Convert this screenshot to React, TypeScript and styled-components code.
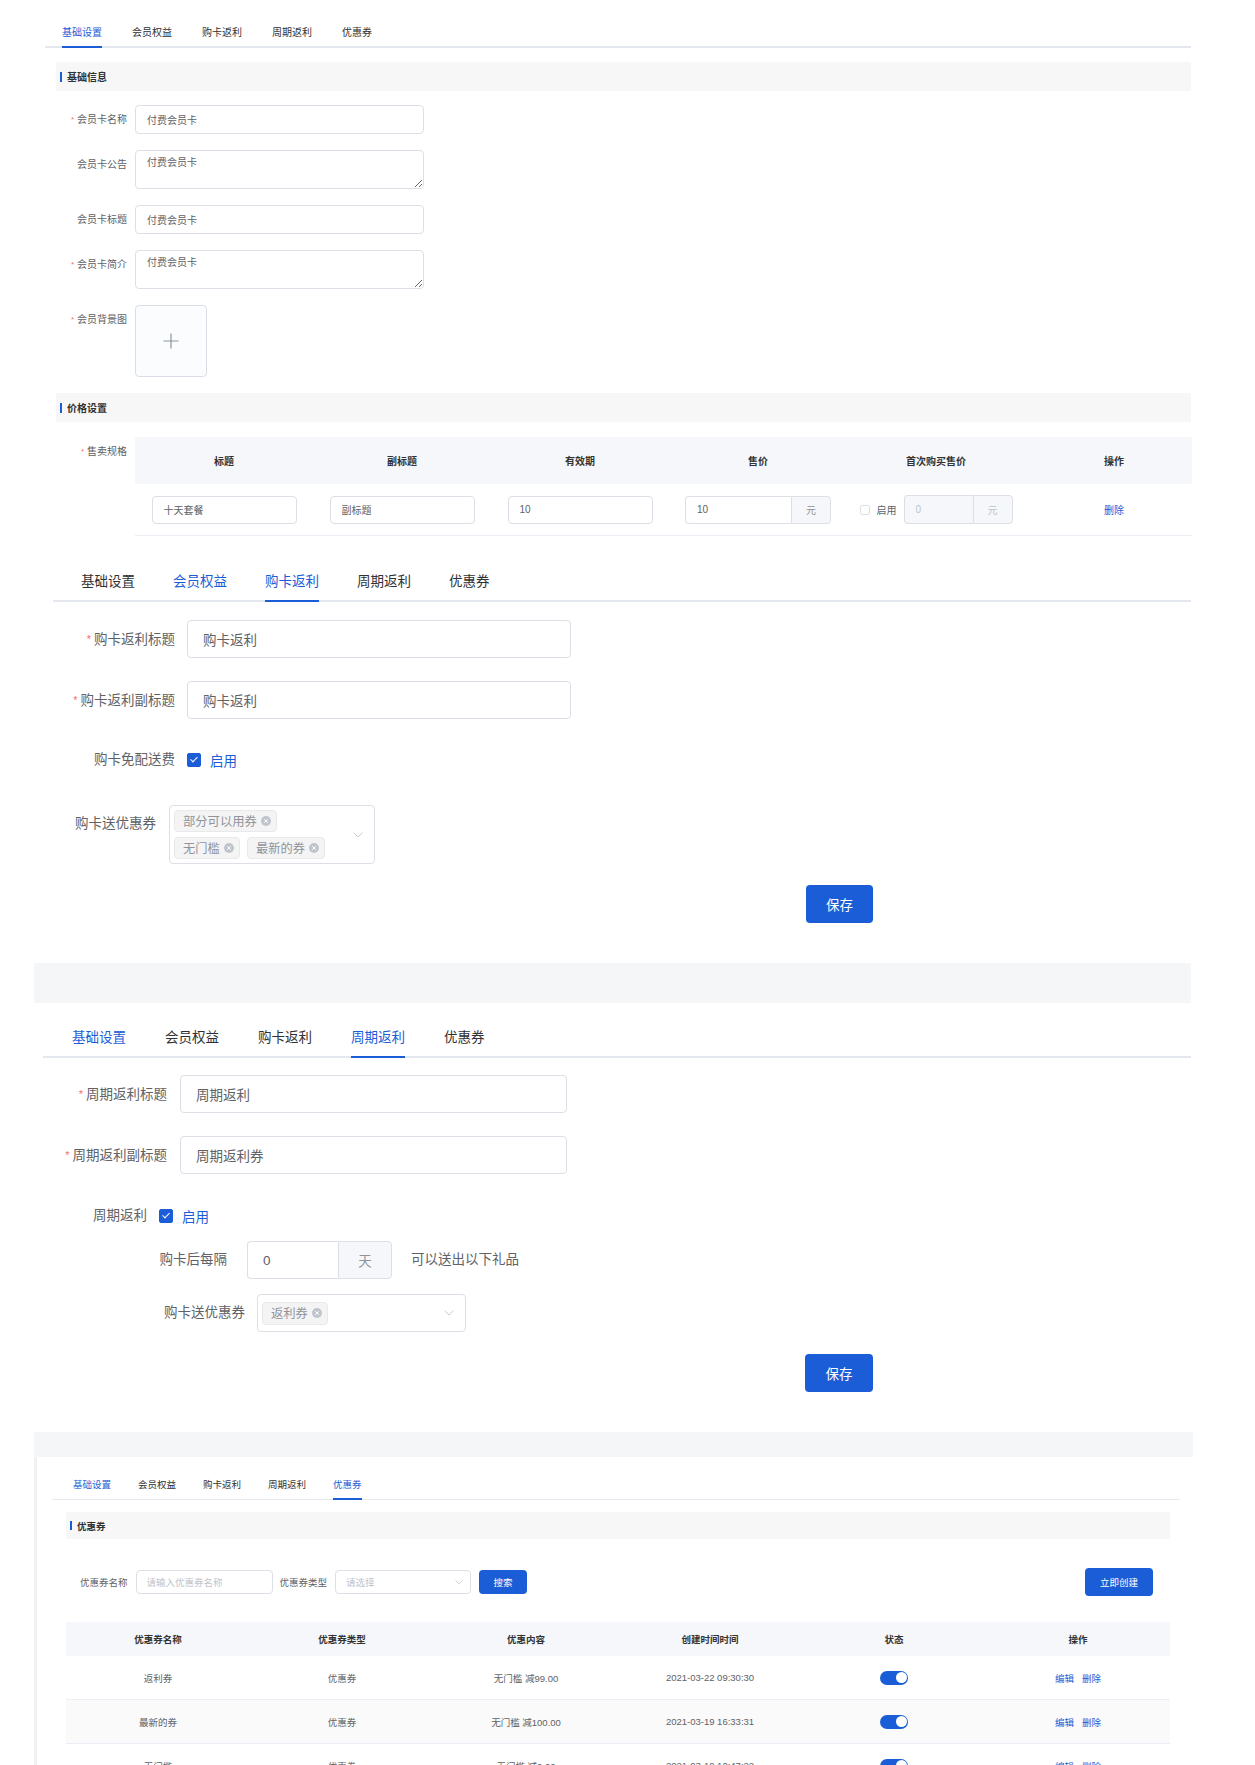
import React from "react";
import styled, { createGlobalStyle, css } from "styled-components";

const BLUE = "#1a5dd6";

const GlobalStyle = createGlobalStyle`
	* { box-sizing: border-box; }
	body {
		margin: 0;
		background: #fff;
		font-family: "Liberation Sans", "Noto Sans CJK SC", sans-serif;
		color: #606266;
	}
	input, textarea, button { font-family: inherit; }
`;

const Page = styled.div`
	width: 1255px;
	display: flex;
	flex-direction: column;
	padding-top: 20px;
`;

// ---------- tabs ----------
const TabBar = styled.div<{ $left: number; $width: number; $inset: number; $gap: number; $line: number; $top: number }>`
	display: flex;
	gap: ${({ $gap }) => $gap}px;
	margin: ${({ $top }) => $top}px 0 0 ${({ $left }) => $left}px;
	width: ${({ $width }) => $width}px;
	padding-left: ${({ $inset }) => $inset}px;
	border-bottom: ${({ $line }) => $line}px solid #e4e7ed;
`;

const TabItem = styled.div<{ $fs: number; $h: number; $line: number; $active?: boolean; $blue?: boolean }>`
	box-sizing: content-box;
	height: ${({ $h }) => $h}px;
	line-height: ${({ $h }) => $h}px;
	font-size: ${({ $fs }) => $fs}px;
	white-space: nowrap;
	color: ${({ $active, $blue }) => ($active || $blue ? BLUE : "#303133")};
	border-bottom: 2px solid ${({ $active }) => ($active ? BLUE : "transparent")};
	margin-bottom: -${({ $line }) => $line}px;
`;

const TABS = ["基础设置", "会员权益", "购卡返利", "周期返利", "优惠券"];

type TabCfg = { left: number; width: number; inset: number; gap: number; fs: number; h: number; line: number; top: number };

function Tabs({ cfg, active, blue = [] }: { cfg: TabCfg; active: number; blue?: number[] }) {
	return (
		<TabBar $left={cfg.left} $width={cfg.width} $inset={cfg.inset} $gap={cfg.gap} $line={cfg.line} $top={cfg.top}>
			{TABS.map((t, i) => (
				<TabItem key={t} $fs={cfg.fs} $h={cfg.h} $line={cfg.line} $active={i === active} $blue={blue.includes(i)}>
					{t}
				</TabItem>
			))}
		</TabBar>
	);
}

// ---------- shared blocks ----------
const SectionTitle = styled.div<{ $top: number; $left: number; $width: number; $h: number; $fs: number }>`
	display: flex;
	align-items: center;
	margin: ${({ $top }) => $top}px 0 0 ${({ $left }) => $left}px;
	width: ${({ $width }) => $width}px;
	height: ${({ $h }) => $h}px;
	padding-left: 4px;
	background: #f7f7f7;
	font-size: ${({ $fs }) => $fs}px;
	font-weight: bold;
	color: #303133;
	&::before {
		content: "";
		width: 2px;
		height: ${({ $fs }) => $fs}px;
		background: ${BLUE};
		margin-right: 5px;
	}
`;

const Band = styled.div<{ $top: number; $h: number }>`
	margin: ${({ $top }) => $top}px 0 0 34px;
	width: ${({ $h }) => ($h > 30 ? 1157 : 1159)}px;
	height: ${({ $h }) => $h}px;
	background: #f5f6f7;
`;

const Row = styled.div<{ $top: number; $left: number; $center?: boolean }>`
	display: flex;
	align-items: ${({ $center }) => ($center ? "center" : "flex-start")};
	margin: ${({ $top }) => $top}px 0 0 ${({ $left }) => $left}px;
`;

const Label = styled.div<{ $w: number; $pr: number; $fs: number; $lh: number; $req?: boolean }>`
	width: ${({ $w }) => $w}px;
	flex-shrink: 0;
	padding-right: ${({ $pr }) => $pr}px;
	text-align: right;
	font-size: ${({ $fs }) => $fs}px;
	line-height: ${({ $lh }) => $lh}px;
	color: #606266;
	white-space: nowrap;
	${({ $req }) =>
		$req &&
		css`
			&::before {
				content: "*";
				color: #f56c6c;
				margin-right: 3px;
				font-size: 0.8em;
				vertical-align: 1px;
			}
		`}
`;

const Field = styled.input<{ $w: number; $h: number; $fs: number; $pl: number; $joined?: boolean }>`
	display: block;
	width: ${({ $w }) => $w}px;
	height: ${({ $h }) => $h}px;
	padding: 0 ${({ $pl }) => $pl}px;
	border: 1px solid #dcdfe6;
	border-radius: ${({ $joined }) => ($joined ? "4px 0 0 4px" : "4px")};
	${({ $joined }) => $joined && "border-right: none;"}
	font-size: ${({ $fs }) => $fs}px;
	color: #606266;
	background: #fff;
	outline: none;
	&::placeholder { color: #c0c4cc; }
	&:disabled { background: #f5f7fa; color: #c0c4cc; }
`;

const Area = styled.textarea`
	display: block;
	width: 289px;
	height: 39px;
	padding: 5px 11px;
	border: 1px solid #dcdfe6;
	border-radius: 4px;
	font-size: 10px;
	line-height: 14px;
	color: #606266;
	resize: vertical;
	outline: none;
`;

const Group = styled.div<{ $h: number }>`
	display: flex;
	height: ${({ $h }) => $h}px;
`;

const Append = styled.div<{ $w: number; $fs: number; $muted?: boolean }>`
	display: flex;
	align-items: center;
	justify-content: center;
	width: ${({ $w }) => $w}px;
	border: 1px solid #dcdfe6;
	border-radius: 0 4px 4px 0;
	background: #f5f7fa;
	font-size: ${({ $fs }) => $fs}px;
	color: ${({ $muted }) => ($muted ? "#c0c4cc" : "#909399")};
`;

const Upload = styled.div`
	display: flex;
	align-items: center;
	justify-content: center;
	width: 72px;
	height: 72px;
	border: 1px solid #d9dee6;
	border-radius: 4px;
	background: #fbfcfe;
`;

const Check = styled.span<{ $size: number; $checked?: boolean }>`
	position: relative;
	display: inline-block;
	flex-shrink: 0;
	width: ${({ $size }) => $size}px;
	height: ${({ $size }) => $size}px;
	border: 1px solid ${({ $checked }) => ($checked ? BLUE : "#dcdfe6")};
	border-radius: 2px;
	background: ${({ $checked }) => ($checked ? BLUE : "#fff")};
	${({ $checked }) =>
		$checked &&
		css`
			&::after {
				content: "";
				position: absolute;
				left: 34%;
				top: 12%;
				width: 24%;
				height: 50%;
				border: solid #fff;
				border-width: 0 1.5px 1.5px 0;
				transform: rotate(45deg);
			}
		`}
`;

const CheckText = styled.span<{ $fs: number; $ml: number; $on?: boolean }>`
	margin-left: ${({ $ml }) => $ml}px;
	font-size: ${({ $fs }) => $fs}px;
	color: ${({ $on }) => ($on ? BLUE : "#606266")};
	white-space: nowrap;
`;

const Button = styled.button<{ $w: number; $h: number; $fs: number; $ml: string }>`
	flex-shrink: 0;
	width: ${({ $w }) => $w}px;
	height: ${({ $h }) => $h}px;
	margin-left: ${({ $ml }) => $ml};
	padding: 0;
	border: none;
	border-radius: 4px;
	background: ${BLUE};
	color: #fff;
	font-size: ${({ $fs }) => $fs}px;
`;

const ButtonRow = styled.div<{ $top: number; $left: number }>`
	display: flex;
	margin: ${({ $top }) => $top}px 0 0 ${({ $left }) => $left}px;
`;

// ---------- multi select ----------
const SelectBox = styled.div<{ $w: number; $h: number }>`
	display: flex;
	align-items: center;
	width: ${({ $w }) => $w}px;
	height: ${({ $h }) => $h}px;
	padding: 0 11px 0 4px;
	border: 1px solid #dcdfe6;
	border-radius: 4px;
	background: #fff;
`;

const TagWrap = styled.div<{ $w?: number }>`
	display: flex;
	flex-wrap: wrap;
	gap: 5px 7px;
	${({ $w }) => ($w ? `width: ${$w}px; margin-right: auto;` : "flex: 1;")}
`;

const Tag = styled.span<{ $h: number }>`
	display: inline-flex;
	align-items: center;
	gap: 4px;
	height: ${({ $h }) => $h}px;
	padding: 0 5px 0 8px;
	border: 1px solid #e9e9eb;
	border-radius: 4px;
	background: #f4f4f5;
	font-size: 12.3px;
	color: #909399;
	white-space: nowrap;
`;

const CloseDot = () => (
	<svg width="10" height="10" viewBox="0 0 10 10">
		<circle cx="5" cy="5" r="5" fill="#c0c4cc" />
		<path d="M3.2 3.2l3.6 3.6M6.8 3.2l-3.6 3.6" stroke="#fff" strokeWidth="1" />
	</svg>
);

const Chevron = ({ w = 10 }: { w?: number }) => (
	<svg width={w} height={w * 0.6} viewBox="0 0 10 6" style={{ flexShrink: 0 }}>
		<path d="M0.6 0.6L5 5 9.4 0.6" fill="none" stroke="#c0c4cc" strokeWidth="0.9" />
	</svg>
);

// ---------- spec table (section A) ----------
const SpecTable = styled.div`
	width: 1057px;
	overflow: hidden;
`;

const SpecGrid = styled.div`
	display: grid;
	grid-template-columns: repeat(6, 178px);
`;

const SpecHead = styled.div`
	display: flex;
	align-items: center;
	justify-content: center;
	height: 47px;
	background: #f5f7fa;
	font-size: 10px;
	font-weight: bold;
	color: #333;
`;

const SpecCell = styled.div`
	display: flex;
	align-items: center;
	justify-content: center;
	height: 52px;
	border-bottom: 1px solid #ebeef5;
	font-size: 10px;
`;

const LinkText = styled.span<{ $fs: number }>`
	font-size: ${({ $fs }) => $fs}px;
	color: ${BLUE};
`;

// ---------- coupon panel (section D) ----------
const Panel = styled.div`
	margin-left: 34px;
	border-left: 3px solid #f0f1f3;
	padding-bottom: 40px;
`;

const SearchRow = styled.div`
	display: flex;
	align-items: center;
	width: 1104px;
	height: 28px;
	margin: 29px 0 0 29px;
	padding: 0 17px 0 14px;
`;

const SearchLabel = styled.span<{ $ml: number }>`
	margin: 0 8px 0 ${({ $ml }) => $ml}px;
	font-size: 9.5px;
	color: #606266;
	white-space: nowrap;
`;

const MiniSelect = styled.div`
	display: flex;
	align-items: center;
	justify-content: space-between;
	width: 136px;
	height: 24px;
	padding: 0 7px 0 10px;
	border: 1px solid #dcdfe6;
	border-radius: 4px;
	font-size: 9.5px;
	color: #c0c4cc;
`;

const CouponGrid = styled.div`
	display: grid;
	grid-template-columns: repeat(6, 184px);
	margin: 26px 0 0 29px;
	width: 1104px;
`;

const CouponHead = styled.div`
	display: flex;
	align-items: center;
	justify-content: center;
	height: 34px;
	background: #f5f7fa;
	font-size: 9.5px;
	font-weight: bold;
	color: #333;
`;

const CouponCell = styled.div<{ $striped?: boolean }>`
	display: flex;
	align-items: center;
	justify-content: center;
	gap: 8px;
	height: 44px;
	border-bottom: 1px solid #ebeef5;
	background: ${({ $striped }) => ($striped ? "#fafafa" : "#fff")};
	font-size: 9.5px;
	color: #606266;
`;

const Switch = styled.span`
	display: inline-flex;
	align-items: center;
	justify-content: flex-end;
	width: 28px;
	height: 14px;
	padding: 0 1.5px;
	border-radius: 7px;
	background: ${BLUE};
	&::after {
		content: "";
		width: 11px;
		height: 11px;
		border-radius: 50%;
		background: #fff;
	}
`;

const InlineText = styled.span`
	margin-left: 19px;
	font-size: 13.5px;
	line-height: 38px;
	color: #606266;
	white-space: nowrap;
`;

const coupons = [
	{ name: "返利券", type: "优惠券", content: "无门槛 减99.00", time: "2021-03-22 09:30:30" },
	{ name: "最新的券", type: "优惠券", content: "无门槛 减100.00", time: "2021-03-19 16:33:31" },
	{ name: "无门槛", type: "优惠券", content: "无门槛 减0.00", time: "2021-03-19 10:47:22" },
];

const A_TABS: TabCfg = { left: 45, width: 1146, inset: 17, gap: 30, fs: 10, h: 26, line: 2, top: 0 };
const B_TABS: TabCfg = { left: 53, width: 1138, inset: 28, gap: 38, fs: 13.5, h: 36, line: 2, top: 28 };
const C_TABS: TabCfg = { left: 43, width: 1148, inset: 29, gap: 39, fs: 13.5, h: 36, line: 2, top: 17 };
const D_TABS: TabCfg = { left: 15, width: 1128, inset: 21, gap: 27, fs: 9.5, h: 26, line: 1, top: 15 };

function BasicSection() {
	const aLabel = { $w: 79, $pr: 8, $fs: 10, $lh: 29 };
	return (
		<>
			<Tabs cfg={A_TABS} active={0} />
			<SectionTitle $top={14} $left={56} $width={1135} $h={29} $fs={10}>基础信息</SectionTitle>
			<Row $top={14} $left={56}>
				<Label {...aLabel} $req>会员卡名称</Label>
				<Field $w={289} $h={29} $fs={10} $pl={11} value="付费会员卡" readOnly />
			</Row>
			<Row $top={16} $left={56}>
				<Label {...aLabel}>会员卡公告</Label>
				<Area value="付费会员卡" readOnly />
			</Row>
			<Row $top={16} $left={56}>
				<Label {...aLabel}>会员卡标题</Label>
				<Field $w={289} $h={29} $fs={10} $pl={11} value="付费会员卡" readOnly />
			</Row>
			<Row $top={16} $left={56}>
				<Label {...aLabel} $req>会员卡简介</Label>
				<Area value="付费会员卡" readOnly />
			</Row>
			<Row $top={16} $left={56}>
				<Label {...aLabel} $req>会员背景图</Label>
				<Upload>
					<svg width="16" height="16" viewBox="0 0 16 16">
						<path d="M8 0.5v15M0.5 8h15" stroke="#8c939d" strokeWidth="1.2" />
					</svg>
				</Upload>
			</Row>
			<SectionTitle $top={16} $left={56} $width={1135} $h={29} $fs={10}>价格设置</SectionTitle>
			<Row $top={15} $left={56}>
				<Label $w={79} $pr={8} $fs={10} $lh={30} $req>售卖规格</Label>
				<SpecTable>
					<SpecGrid>
						{["标题", "副标题", "有效期", "售价", "首次购买售价", "操作"].map((h) => (
							<SpecHead key={h}>{h}</SpecHead>
						))}
						<SpecCell>
							<Field $w={145} $h={28} $fs={10} $pl={11} value="十天套餐" readOnly />
						</SpecCell>
						<SpecCell>
							<Field $w={145} $h={28} $fs={10} $pl={11} value="副标题" readOnly />
						</SpecCell>
						<SpecCell>
							<Field $w={145} $h={28} $fs={10} $pl={11} value="10" readOnly />
						</SpecCell>
						<SpecCell>
							<Group $h={28}>
								<Field $w={106} $h={28} $fs={10} $pl={11} $joined value="10" readOnly />
								<Append $w={40} $fs={10}>元</Append>
							</Group>
						</SpecCell>
						<SpecCell>
							<Check $size={10} />
							<CheckText $fs={10} $ml={7}>启用</CheckText>
							<Group $h={29} style={{ marginLeft: 7 }}>
								<Field $w={69} $h={29} $fs={10} $pl={11} $joined value="0" disabled readOnly />
								<Append $w={40} $fs={10} $muted>元</Append>
							</Group>
						</SpecCell>
						<SpecCell>
							<LinkText $fs={10}>删除</LinkText>
						</SpecCell>
					</SpecGrid>
				</SpecTable>
			</Row>
		</>
	);
}

function RebateSection() {
	const bLabel = { $w: 134, $pr: 12, $fs: 13.5, $lh: 38 };
	return (
		<>
			<Tabs cfg={B_TABS} active={2} blue={[1]} />
			<Row $top={18} $left={53}>
				<Label {...bLabel} $req>购卡返利标题</Label>
				<Field $w={384} $h={38} $fs={13.5} $pl={15} value="购卡返利" readOnly />
			</Row>
			<Row $top={22} $left={53}>
				<Label {...bLabel} $req>购卡返利副标题</Label>
				<Field $w={384} $h={38} $fs={13.5} $pl={15} value="购卡返利" readOnly />
			</Row>
			<Row $top={21} $left={53} $center>
				<Label {...bLabel}>购卡免配送费</Label>
				<Check $size={14} $checked />
				<CheckText $fs={13.5} $ml={9} $on>启用</CheckText>
			</Row>
			<Row $top={26} $left={53}>
				<Label $w={116} $pr={13} $fs={13.5} $lh={38}>购卡送优惠券</Label>
				<SelectBox $w={206} $h={59}>
					<TagWrap $w={165}>
						<Tag $h={22}>部分可以用券<CloseDot /></Tag>
						<Tag $h={22}>无门槛<CloseDot /></Tag>
						<Tag $h={22}>最新的券<CloseDot /></Tag>
					</TagWrap>
					<Chevron />
				</SelectBox>
			</Row>
			<ButtonRow $top={21} $left={806}>
				<Button $w={67} $h={38} $fs={13.5} $ml="0">保存</Button>
			</ButtonRow>
			<Band $top={40} $h={40} />
		</>
	);
}

function CycleSection() {
	const cLabel = { $w: 137, $pr: 13, $fs: 13.5, $lh: 38 };
	return (
		<>
			<Tabs cfg={C_TABS} active={3} blue={[0]} />
			<Row $top={17} $left={43}>
				<Label {...cLabel} $req>周期返利标题</Label>
				<Field $w={387} $h={38} $fs={13.5} $pl={15} value="周期返利" readOnly />
			</Row>
			<Row $top={22} $left={43}>
				<Label {...cLabel} $req>周期返利副标题</Label>
				<Field $w={387} $h={38} $fs={13.5} $pl={15} value="周期返利券" readOnly />
			</Row>
			<Row $top={22} $left={43} $center>
				<Label $w={116} $pr={12} $fs={13.5} $lh={38}>周期返利</Label>
				<Check $size={14} $checked />
				<CheckText $fs={13.5} $ml={9} $on>启用</CheckText>
			</Row>
			<Row $top={6} $left={43}>
				<Label $w={204} $pr={20} $fs={13.5} $lh={38}>购卡后每隔</Label>
				<Group $h={38}>
					<Field $w={91} $h={38} $fs={13.5} $pl={15} $joined value="0" readOnly />
					<Append $w={54} $fs={13.5}>天</Append>
				</Group>
				<InlineText>可以送出以下礼品</InlineText>
			</Row>
			<Row $top={15} $left={43}>
				<Label $w={214} $pr={12} $fs={13.5} $lh={38}>购卡送优惠券</Label>
				<SelectBox $w={209} $h={38}>
					<TagWrap>
						<Tag $h={23}>返利券<CloseDot /></Tag>
					</TagWrap>
					<Chevron />
				</SelectBox>
			</Row>
			<ButtonRow $top={22} $left={805}>
				<Button $w={68} $h={38} $fs={13.5} $ml="0">保存</Button>
			</ButtonRow>
			<Band $top={40} $h={25} />
		</>
	);
}

function CouponSection() {
	return (
		<Panel>
			<Tabs cfg={D_TABS} active={4} blue={[0]} />
			<SectionTitle $top={12} $left={29} $width={1104} $h={27} $fs={9.5}>优惠券</SectionTitle>
			<SearchRow>
				<SearchLabel $ml={0}>优惠券名称</SearchLabel>
				<Field $w={137} $h={24} $fs={9.5} $pl={10} placeholder="请输入优惠券名称" />
				<SearchLabel $ml={7}>优惠券类型</SearchLabel>
				<MiniSelect>
					请选择
					<Chevron w={8} />
				</MiniSelect>
				<Button $w={48} $h={24} $fs={9.5} $ml="8px">搜索</Button>
				<Button $w={68} $h={28} $fs={9.5} $ml="auto">立即创建</Button>
			</SearchRow>
			<CouponGrid>
				{["优惠券名称", "优惠券类型", "优惠内容", "创建时间时间", "状态", "操作"].map((h) => (
					<CouponHead key={h}>{h}</CouponHead>
				))}
				{coupons.map((c, i) => (
					<React.Fragment key={c.time}>
						<CouponCell $striped={i === 1}>{c.name}</CouponCell>
						<CouponCell $striped={i === 1}>{c.type}</CouponCell>
						<CouponCell $striped={i === 1}>{c.content}</CouponCell>
						<CouponCell $striped={i === 1}>{c.time}</CouponCell>
						<CouponCell $striped={i === 1}>
							<Switch />
						</CouponCell>
						<CouponCell $striped={i === 1}>
							<LinkText $fs={9.5}>编辑</LinkText>
							<LinkText $fs={9.5}>删除</LinkText>
						</CouponCell>
					</React.Fragment>
				))}
			</CouponGrid>
		</Panel>
	);
}

export default function App() {
	return (
		<>
			<GlobalStyle />
			<Page>
				<BasicSection />
				<RebateSection />
				<CycleSection />
				<CouponSection />
			</Page>
		</>
	);
}
